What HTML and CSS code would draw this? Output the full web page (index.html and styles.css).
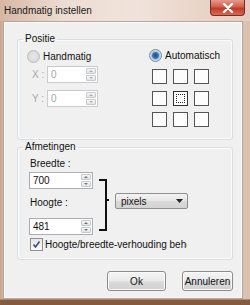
FILE: index.html
```html
<!DOCTYPE html>
<html lang="nl">
<head>
  <meta charset="UTF-8">
  <title>Handmatig instellen</title>
  <link rel="stylesheet" href="styles.css">
</head>
<body>

<div class="window">
  <div class="titlebar">
    <span class="title">Handmatig instellen</span>
    <span class="close">
      <svg width="12" height="10" viewBox="0 0 12 10"><path d="M2 1 L10 9 M10 1 L2 9" stroke="#fff" stroke-width="2.4" stroke-linecap="round"/></svg>
    </span>
  </div>

  <div class="frame-row">
    <div class="client">

      <fieldset class="group">
        <legend>Positie</legend>
        <div class="pos-cols">
          <div class="manual">
            <div class="radio"><span class="dot"></span>Handmatig</div>
            <div class="coord">
              <span class="coord-label">X :</span>
              <div class="spin small disabled"><span class="val">0</span><span class="arrows"><i class="up"></i><i class="down"></i></span></div>
            </div>
            <div class="coord coord-y">
              <span class="coord-label">Y :</span>
              <div class="spin small disabled"><span class="val">0</span><span class="arrows"><i class="up"></i><i class="down"></i></span></div>
            </div>
          </div>
          <div class="auto">
            <div class="radio"><span class="dot checked"></span>Automatisch</div>
            <div class="anchors">
              <span class="anchor"></span><span class="anchor"></span><span class="anchor"></span>
              <span class="anchor"></span><span class="anchor active"><b></b></span><span class="anchor"></span>
              <span class="anchor"></span><span class="anchor"></span><span class="anchor"></span>
            </div>
          </div>
        </div>
      </fieldset>

      <fieldset class="group">
        <legend>Afmetingen</legend>
        <div class="size-row">
          <div class="size-fields">
            <div class="field-label">Breedte :</div>
            <div class="spin wide"><span class="val">700</span><span class="arrows"><i class="up"></i><i class="down"></i></span></div>
            <div class="field-label second">Hoogte :</div>
            <div class="spin wide last"><span class="val">481</span><span class="arrows"><i class="up"></i><i class="down"></i></span></div>
          </div>
          <svg class="bracket" width="12" height="52" viewBox="0 0 12 52">
            <path d="M0 1 H7 V51 H0 M7 21 H10" fill="none" stroke="#111" stroke-width="2"/>
          </svg>
          <div class="select"><span>pixels</span><svg width="7" height="4" viewBox="0 0 7 4"><path d="M0 0 H7 L3.5 4 Z" fill="#222"/></svg></div>
        </div>
        <div class="check-row">
          <span class="checkbox"><svg width="9" height="9" viewBox="0 0 9 9"><path d="M1.5 4.5 L3.5 7 L7.5 1.5" fill="none" stroke="#3b4d7a" stroke-width="1.6"/></svg></span>
          <span class="check-text">Hoogte/breedte-verhouding behouden</span>
        </div>
      </fieldset>

      <div class="buttons">
        <button class="btn btn-ok">Ok</button>
        <button class="btn btn-cancel">Annuleren</button>
      </div>

    </div>
  </div>
  <div class="frame-bottom"></div>
</div>

</body>
</html>
```

FILE: styles.css
```css
body {
  margin: 0;
  padding: 0;
  font-family: "Liberation Sans", Arial, sans-serif;
  font-size: 10px;
  color: #111;
}
.window {
  width: 250px;
  height: 305px;
  overflow: hidden;
  background: linear-gradient(to right, #c7a48d 0px, #d8bba8 4px, #e9d6cb 40%, #e6cfc2 70%, #d9c1b2 100%);
}
.titlebar {
  height: 21px;
  display: flex;
  align-items: flex-start;
  justify-content: space-between;
  background: linear-gradient(to right, #d6b7a3, #eddcd2 25%, #f0e3db 55%, #e9d4c8 80%, #e6cdc0);
}
.title {
  padding: 4px 0 0 4px;
  font-size: 10px;
  line-height: 13px;
  color: #1a1a1a;
}
.close {
  width: 33px;
  height: 15px;
  margin-right: 5px;
  display: flex;
  align-items: center;
  justify-content: center;
  border: 1px solid #7a2b22;
  border-top: none;
  border-radius: 0 0 4px 4px;
  background: linear-gradient(#e6998a, #d0604e 45%, #c03a28 55%, #d66a52);
}
.frame-row {
  display: flex;
  padding-left: 3px;
}
.client {
  width: 238px;
  height: 276px;
  border: 1px solid #b3a69c;
  background: #f0f0f0;
  box-shadow: inset 0 0 0 1px #fafafa;
}
.frame-bottom {
  height: 7px;
  border-top: 1px solid #a88b77;
  background: #855a3d;
}
.group {
  margin: 10px 9px 0 13px;
  padding: 0;
  border: 1px solid #d5dfe5;
  border-radius: 3px;
  box-shadow: inset 0 0 0 1px #fbfbfb;
}
.group + .group {
  margin-top: 0;
}
.group legend {
  margin-left: 5px;
  padding: 0 2px;
  line-height: 14px;
}
.pos-cols {
  display: grid;
  grid-template-columns: 122px auto;
  padding: 3px 0 12px 9px;
}
.radio {
  display: flex;
  align-items: center;
  height: 14px;
}
.dot {
  width: 11px;
  height: 11px;
  margin-right: 3px;
  border: 1px solid #9aa0a6;
  border-radius: 50%;
  background: radial-gradient(#f4f4f4, #dcdcdc);
}
.manual .dot {
  border-color: #b8bcc0;
  background: radial-gradient(#e8e8e8, #d4d4d4);
}
.dot.checked {
  background: radial-gradient(circle, #1c4f86 0px, #3a78b8 3px, #a9c4df 4px, #e4ecf4 6px);
  border-color: #7e8a96;
}
.coord {
  display: flex;
  align-items: center;
  margin: 3px 0 0 5px;
}
.coord-y {
  margin-top: 7px;
}
.coord-label {
  width: 15px;
  color: #a8a8a8;
}
.spin {
  height: 15px;
  display: flex;
  border: 1px solid #abadb3;
  background: #fff;
}
.spin .val {
  flex: 1;
  padding-left: 3px;
  line-height: 15px;
}
.spin.small {
  width: 49px;
}
.spin.disabled {
  border-color: #c9cbcf;
}
.spin.disabled .val {
  color: #a8a8a8;
}
.arrows {
  width: 10px;
  display: flex;
  flex-direction: column;
  padding: 1px;
  gap: 1px;
}
.arrows i {
  flex: 1;
  border: 1px solid #c6c9cd;
  border-radius: 1px;
  background: linear-gradient(#f7f7f7, #e4e4e4);
  position: relative;
}
.arrows i::after {
  content: "";
  position: absolute;
  left: 2px;
  top: 1px;
  border-left: 2px solid transparent;
  border-right: 2px solid transparent;
}
.arrows .up::after {
  border-bottom: 2px solid #777;
}
.arrows .down::after {
  border-top: 2px solid #777;
}
.disabled .arrows i::after {
  opacity: 0.5;
}
.auto .radio {
  margin-top: -1px;
}
.anchors {
  display: grid;
  grid-template-columns: repeat(3, 15px);
  grid-auto-rows: 15px;
  column-gap: 6px;
  row-gap: 6.5px;
  margin: 7px 0 0 3px;
}
.anchor {
  border: 1px solid #555;
  background: #fcfcfc;
  box-sizing: border-box;
}
.anchor.active {
  padding: 2px;
  border-color: #333;
}
.anchor.active b {
  display: block;
  height: 100%;
  border: 1px dotted #222;
  box-sizing: border-box;
}
.size-row {
  display: flex;
  padding: 3px 0 0 11px;
}
.field-label {
  line-height: 14px;
  margin-left: 1px;
}
.field-label.second {
  margin-top: 7px;
}
.spin.wide {
  width: 62px;
  margin-top: 1px;
}
.spin.wide.last {
  margin-top: 8px;
}
.bracket {
  margin: 22px 0 0 6px;
}
.select {
  width: 73px;
  height: 16px;
  margin: 36px 0 0 4px;
  display: flex;
  align-items: center;
  justify-content: space-between;
  padding: 0 4px 0 5px;
  box-sizing: border-box;
  border: 1px solid #8e8f8f;
  border-radius: 2px;
  background: linear-gradient(#f3f3f3, #e6e6e6 50%, #dadada 51%, #d3d3d3);
}
.check-row {
  display: flex;
  align-items: center;
  height: 14px;
  margin: 2px 0 8px 12px;
}
.checkbox {
  width: 11px;
  height: 11px;
  margin-right: 2px;
  display: flex;
  align-items: center;
  justify-content: center;
  border: 1px solid #8f8f8f;
  background: linear-gradient(#e6e6e6, #fafafa);
}
.check-text {
  width: 142px;
  overflow: hidden;
  white-space: nowrap;
}
.buttons {
  display: flex;
  justify-content: flex-end;
  gap: 16px;
  margin: 11px 9px 0 0;
}
.btn {
  height: 20px;
  padding: 0;
  font-family: inherit;
  font-size: 10px;
  color: #111;
  border: 1px solid #8c8c8c;
  border-radius: 3px;
  background: linear-gradient(#f4f4f4, #ebebeb 50%, #dddddd 51%, #cfcfcf);
  box-shadow: inset 0 0 0 1px #fbfbfb;
}
.btn-ok {
  width: 59px;
}
.btn-cancel {
  width: 51px;
}
```
